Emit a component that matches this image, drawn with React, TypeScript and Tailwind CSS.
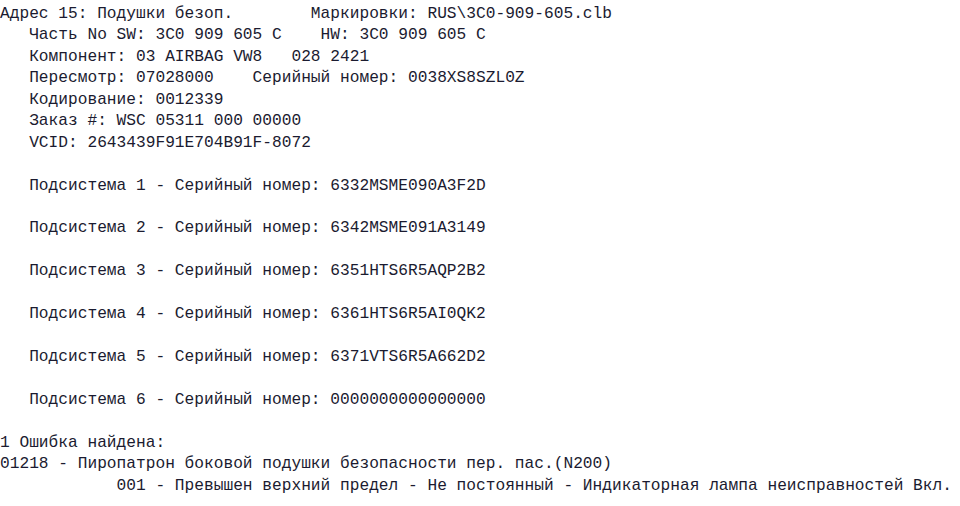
const lines = [
  "Адрес 15: Подушки безоп.        Маркировки: RUS\\3C0-909-605.clb",
  "   Часть No SW: 3C0 909 605 C    HW: 3C0 909 605 C",
  "   Компонент: 03 AIRBAG VW8   028 2421",
  "   Пересмотр: 07028000    Серийный номер: 0038XS8SZL0Z",
  "   Кодирование: 0012339",
  "   Заказ #: WSC 05311 000 00000",
  "   VCID: 2643439F91E704B91F-8072",
  "",
  "   Подсистема 1 - Серийный номер: 6332MSME090A3F2D",
  "",
  "   Подсистема 2 - Серийный номер: 6342MSME091A3149",
  "",
  "   Подсистема 3 - Серийный номер: 6351HTS6R5AQP2B2",
  "",
  "   Подсистема 4 - Серийный номер: 6361HTS6R5AI0QK2",
  "",
  "   Подсистема 5 - Серийный номер: 6371VTS6R5A662D2",
  "",
  "   Подсистема 6 - Серийный номер: 0000000000000000",
  "",
  "1 Ошибка найдена:",
  "01218 - Пиропатрон боковой подушки безопасности пер. пас.(N200)",
  "            001 - Превышен верхний предел - Не постоянный - Индикаторная лампа неисправностей Вкл.",
];

export default function App() {
  return (
    <div className="w-[960px] h-[506px] overflow-hidden bg-white pt-[4px]">
      <pre className="m-0 whitespace-pre font-['Liberation_Mono',monospace] text-[16.2px] leading-[21.45px] text-[#1b1b30]">
        {lines.map((l, i) => (
          <div key={i} className="h-[21.45px]">
            {l}
          </div>
        ))}
      </pre>
    </div>
  );
}
